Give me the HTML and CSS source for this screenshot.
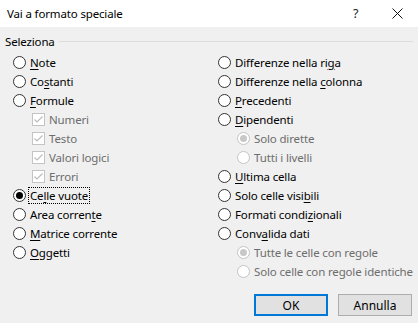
FILE: index.html
```html
<!DOCTYPE html>
<html lang="it">
<head>
<meta charset="utf-8">
<title>Vai a formato speciale</title>
<link rel="stylesheet" href="styles.css">
</head>
<body>
<div class="dialog">
  <header class="titlebar">
    <span class="title">Vai a formato speciale</span>
    <span class="help">?</span>
    <span class="close"><svg width="11" height="11" viewBox="0 0 11 11"><path d="M0.5 0.5 L10.5 10.5 M10.5 0.5 L0.5 10.5" stroke="#111" stroke-width="1" fill="none"/></svg></span>
  </header>
  <main class="content">
    <div class="group-head"><span class="group-label">Seleziona</span><span class="rule"></span></div>
    <div class="cols">
      <div class="col">
        <div class="row"><span class="radio"></span><span class="lbl"><u>N</u>ote</span></div>
        <div class="row"><span class="radio"></span><span class="lbl">Co<u>s</u>tanti</span></div>
        <div class="row"><span class="radio"></span><span class="lbl"><u>F</u>ormule</span></div>
        <div class="row sub"><span class="check"><svg width="11" height="11" viewBox="0 0 11 11"><path d="M1.5 5.5 L4 8 L9.5 2.5" stroke="#bcbcbc" stroke-width="1.2" fill="none"/></svg></span><span class="lbl dis">Numeri</span></div>
        <div class="row sub"><span class="check"><svg width="11" height="11" viewBox="0 0 11 11"><path d="M1.5 5.5 L4 8 L9.5 2.5" stroke="#bcbcbc" stroke-width="1.2" fill="none"/></svg></span><span class="lbl dis">Testo</span></div>
        <div class="row sub"><span class="check"><svg width="11" height="11" viewBox="0 0 11 11"><path d="M1.5 5.5 L4 8 L9.5 2.5" stroke="#bcbcbc" stroke-width="1.2" fill="none"/></svg></span><span class="lbl dis">Valori logici</span></div>
        <div class="row sub"><span class="check"><svg width="11" height="11" viewBox="0 0 11 11"><path d="M1.5 5.5 L4 8 L9.5 2.5" stroke="#bcbcbc" stroke-width="1.2" fill="none"/></svg></span><span class="lbl dis">Errori</span></div>
        <div class="row"><span class="radio on"></span><span class="lbl focus">Ce<u>l</u>le vuote</span></div>
        <div class="row"><span class="radio"></span><span class="lbl">Area corren<u>t</u>e</span></div>
        <div class="row"><span class="radio"></span><span class="lbl"><u>M</u>atrice corrente</span></div>
        <div class="row"><span class="radio"></span><span class="lbl"><u>O</u>ggetti</span></div>
      </div>
      <div class="col">
        <div class="row"><span class="radio"></span><span class="lbl">Differenze nella ri<u>g</u>a</span></div>
        <div class="row"><span class="radio"></span><span class="lbl">Differenze nella <u>c</u>olonna</span></div>
        <div class="row"><span class="radio"></span><span class="lbl"><u>P</u>recedenti</span></div>
        <div class="row"><span class="radio"></span><span class="lbl"><u>D</u>ipendenti</span></div>
        <div class="row sub"><span class="radio dis on"></span><span class="lbl dis">Solo dirette</span></div>
        <div class="row sub"><span class="radio dis"></span><span class="lbl dis">Tutti i livelli</span></div>
        <div class="row"><span class="radio"></span><span class="lbl"><u>U</u>ltima cella</span></div>
        <div class="row"><span class="radio"></span><span class="lbl">Solo celle visi<u>b</u>ili</span></div>
        <div class="row"><span class="radio"></span><span class="lbl">Formati condi<u>z</u>ionali</span></div>
        <div class="row"><span class="radio"></span><span class="lbl">Conv<u>a</u>lida dati</span></div>
        <div class="row sub"><span class="radio dis on"></span><span class="lbl dis">Tutte le celle con regole</span></div>
        <div class="row sub"><span class="radio dis"></span><span class="lbl dis">Solo celle con regole identiche</span></div>
      </div>
    </div>
    <div class="buttons">
      <button class="btn default">OK</button>
      <button class="btn">Annulla</button>
    </div>
  </main>
</div>
</body>
</html>
```
FILE: styles.css
```css
html, body {
  margin: 0;
  padding: 0;
}
body {
  width: 418px;
  height: 323px;
  overflow: hidden;
  font-family: "Noto Sans", "Open Sans", sans-serif;
  font-size: 11.5px;
  letter-spacing: -0.15px;
  color: #000;
  background: #f0f0f0;
}
.dialog {
  width: 418px;
  height: 323px;
  display: flex;
  flex-direction: column;
}
.titlebar {
  height: 27px;
  background: #fff;
  display: flex;
  align-items: center;
  padding-left: 7px;
  box-sizing: border-box;
}
.title {
  flex: 1;
  font-size: 11.5px;
}
.help {
  width: 39px;
  font-size: 12.5px;
  color: #222;
}
.close {
  width: 26px;
  display: flex;
  align-items: center;
}
.content {
  flex: 1;
  display: flex;
  flex-direction: column;
  padding: 6px 6px 0 5px;
}
.group-head {
  display: flex;
  align-items: center;
  height: 16px;
  gap: 4px;
}
.rule {
  flex: 1;
  height: 1px;
  background: #dcdcdc;
  margin-right: -1px;
}
.cols {
  display: grid;
  grid-template-columns: 205px 1fr;
  padding-left: 8px;
  margin-top: 4px;
}
.row {
  height: 19px;
  display: flex;
  align-items: center;
  gap: 4px;
  white-space: nowrap;
}
.row.sub {
  padding-left: 19px;
}
.radio {
  width: 13px;
  height: 13px;
  box-sizing: border-box;
  border: 1px solid #333;
  border-radius: 50%;
  background: #fff;
  position: relative;
  flex: none;
}
.radio.on::after {
  content: "";
  position: absolute;
  left: 2px;
  top: 2px;
  width: 7px;
  height: 7px;
  border-radius: 50%;
  background: #000;
}
.radio.dis {
  border-color: #c4c4c4;
}
.radio.dis.on::after {
  background: #c8c8c8;
}
.check {
  width: 13px;
  height: 13px;
  box-sizing: border-box;
  border: 1px solid #c4c4c4;
  background: #fff;
  display: flex;
  align-items: center;
  justify-content: center;
  flex: none;
}
.lbl {
  line-height: 15px;
}
.lbl u {
  text-underline-offset: 2px;
}
.lbl.dis {
  color: #6d6d6d;
}
.lbl.focus {
  outline: 1px dotted #000;
  outline-offset: 0;
  padding: 0 1px;
  margin-left: -1px;
}
.buttons {
  margin-top: auto;
  margin-bottom: 7px;
  display: flex;
  justify-content: flex-end;
  gap: 10px;
  padding-right: 0;
}
.btn {
  width: 74px;
  height: 22px;
  box-sizing: border-box;
  background: #e1e1e1;
  border: 1px solid #adadad;
  font-family: inherit;
  font-size: 12px;
  color: #000;
  padding: 0;
}
.btn.default {
  border: 2px solid #0078d7;
}
```
